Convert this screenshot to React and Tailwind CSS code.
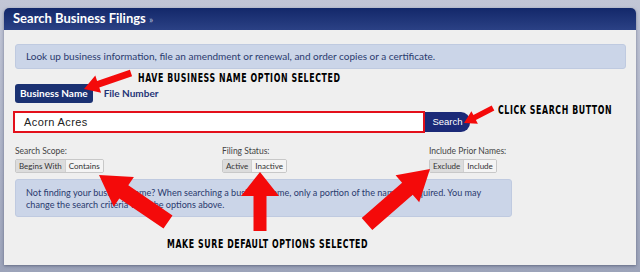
import React from 'react';

// red call-out arrow, tail -> tip, drawn as a single polygon
const arrowPoints = ({ from, to, shaft, head, headW }) => {
  const [x1, y1] = from;
  const [x2, y2] = to;
  const len = Math.hypot(x2 - x1, y2 - y1);
  const ux = (x2 - x1) / len;
  const uy = (y2 - y1) / len;
  const px = -uy;
  const py = ux;
  const bx = x2 - ux * head;
  const by = y2 - uy * head;
  const pts = [
    [x1 + px * shaft, y1 + py * shaft],
    [bx + px * shaft, by + py * shaft],
    [bx + px * headW, by + py * headW],
    [x2, y2],
    [bx - px * headW, by - py * headW],
    [bx - px * shaft, by - py * shaft],
    [x1 - px * shaft, y1 - py * shaft],
  ];
  return pts.map((p) => p.map((n) => n.toFixed(1)).join(',')).join(' ');
};

const arrows = [
  { from: [131, 73], to: [84, 89], shaft: 3.5, head: 15, headW: 9 },
  { from: [493, 108], to: [464, 123], shaft: 2.8, head: 12, headW: 7 },
  { from: [168, 222], to: [99, 175], shaft: 8, head: 30, headW: 18 },
  { from: [260, 231], to: [260, 172], shaft: 6.5, head: 24, headW: 19 },
  { from: [367, 224], to: [430, 169], shaft: 8, head: 30, headW: 18 },
];

const Note = ({ children, className }) => (
  <div
    className={`absolute whitespace-nowrap text-[13px] leading-none font-bold text-black tracking-[0.9px] origin-left scale-x-[0.67] font-['DejaVu_Sans_Condensed','DejaVu_Sans',sans-serif] ${className}`}
  >
    {children}
  </div>
);

const Segmented = ({ items }) => (
  <div className="flex h-[14px] w-fit overflow-hidden rounded-[2px] border border-[#c8c8c8] text-[8px] text-[#333]">
    {items.map((item, i) => (
      <span
        key={item}
        className={`flex items-center px-[3px] ${i === 0 ? 'bg-[#dcdcdc]' : 'border-l border-[#d0d0d0] bg-[#f4f4f4]'}`}
      >
        {item}
      </span>
    ))}
  </div>
);

const Option = ({ label, items }) => (
  <div>
    <p className="h-[11px] text-[8.5px] leading-[11px] text-[#444]">{label}</p>
    <div className="mt-[2px]">
      <Segmented items={items} />
    </div>
  </div>
);

export default function App() {
  return (
    <div className="relative h-[272px] w-[640px] overflow-hidden bg-linear-to-b from-[#c2c6d6] to-[#9ca3b9] px-1 pt-2 font-['Lato',sans-serif]">
      <div className="h-[257px] overflow-hidden rounded-t-[5px] bg-[#efefef] shadow-[0_1px_3px_rgba(40,50,80,0.5)]">
        <div className="flex h-[22px] items-center bg-linear-to-b from-[#13286a] to-[#2b4185] pl-[9px]">
          <h1 className="text-[13px] font-bold text-white">
            Search Business Filings <span className="text-[10px] font-normal text-[#b4bdd6]">»</span>
          </h1>
        </div>

        <div className="pl-[11px] pr-[10px] pt-[14px]">
          <div className="flex h-[25px] items-center rounded-[3px] border border-[#bfcae0] bg-[#cbd5e8] pl-[10px] text-[10px] text-[#2a3a6e]">
            Look up business information, file an amendment or renewal, and order copies or a certificate.
          </div>

          <div className="mt-[15px] flex h-[19px] items-center gap-[11px] text-[10px] font-bold">
            <span className="flex h-full items-center rounded-[3px] bg-[#1a3172] px-[5px] text-white">Business Name</span>
            <span className="text-[#1f3476]">File Number</span>
          </div>

          <div className="-ml-[2px] mt-[8px] flex items-center">
            <div className="flex h-[22px] w-[412px] items-center border-2 border-[#e3101b] bg-white pl-[9px] font-['Liberation_Sans',sans-serif] text-[11px] tracking-[0.4px] text-[#222]">
              Acorn Acres
            </div>
            <button className="flex h-[20px] w-[45px] items-center justify-center rounded-r-[9px] bg-[#1b2a78] font-['Liberation_Sans',sans-serif] text-[9.5px] text-white">
              Search
            </button>
          </div>

          <div className="mt-[13px] grid grid-cols-[207px_207px_1fr]">
            <Option label="Search Scope:" items={['Begins With', 'Contains']} />
            <Option label="Filing Status:" items={['Active', 'Inactive']} />
            <Option label="Include Prior Names:" items={['Exclude', 'Include']} />
          </div>

          <div className="mt-[6px] h-[38px] w-[497px] whitespace-nowrap rounded-[3px] border border-[#bfcae0] bg-[#cbd5e8] pl-[10px] pt-[7px] text-[9.1px] leading-[12px] text-[#2a3a6e]">
            Not finding your business name? When searching a business name, only a portion of the name is required. You may
            <br />
            change the search criteria with the options above.
          </div>
        </div>
      </div>

      <Note className="left-[138px] top-[71px]">HAVE BUSINESS NAME OPTION SELECTED</Note>
      <Note className="left-[498px] top-[103px]">CLICK SEARCH BUTTON</Note>
      <Note className="left-[167px] top-[237px]">MAKE SURE DEFAULT OPTIONS SELECTED</Note>

      <svg className="pointer-events-none absolute left-0 top-0" width="640" height="272">
        {arrows.map((a, i) => (
          <polygon key={i} points={arrowPoints(a)} fill="#f40a0a" />
        ))}
      </svg>
    </div>
  );
}
